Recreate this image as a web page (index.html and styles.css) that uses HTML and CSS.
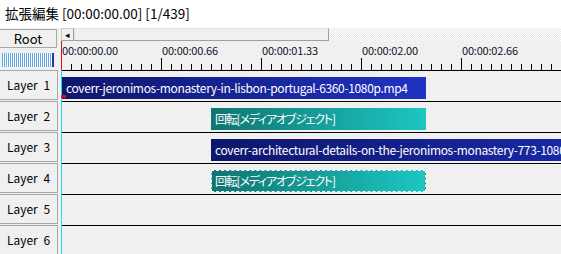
FILE: index.html
```html
<!DOCTYPE html>
<html lang="ja">
  <head>
    <meta charset="utf-8">
    <title>拡張編集</title>
    <link rel="stylesheet" href="styles.css">
  </head>
  <body>
    <div class="caption">拡張編集 [00:00:00.00] [1/439]</div>
    <div class="editor">
      <div class="side">
        <div class="root">Root</div>
        <div class="meter"></div>
        <div class="layer">Layer 1</div>
        <div class="layer">Layer 2</div>
        <div class="layer">Layer 3</div>
        <div class="layer">Layer 4</div>
        <div class="layer">Layer 5</div>
        <div class="layer">Layer 6</div>
      </div>
      <div class="timeline">
        <div class="scrollbar">
          <div class="arrow">◂</div>
          <div class="thumb"></div>
          <div class="track"></div>
        </div>
        <div class="ruler">
          <span>00:00:00.00</span>
          <span>00:00:00.66</span>
          <span>00:00:01.33</span>
          <span>00:00:02.00</span>
          <span>00:00:02.66</span>
        </div>
        <div class="row">
          <div class="clip video" style="margin-left: 1px; width: 364px">coverr-jeronimos-monastery-in-lisbon-portugal-6360-1080p.mp4</div>
        </div>
        <div class="row">
          <div class="clip filter" style="margin-left: 150px; width: 215px">回転[メディアオブジェクト]</div>
        </div>
        <div class="row">
          <div class="clip video" style="margin-left: 150px; width: 560px">coverr-architectural-details-on-the-jeronimos-monastery-773-1080p.mp4</div>
        </div>
        <div class="row">
          <div class="clip filter selected" style="margin-left: 150px; width: 215px">回転[メディアオブジェクト]</div>
        </div>
        <div class="row"></div>
        <div class="row"></div>
        <div class="cursor"></div>
        <div class="cursor-head"></div>
        <div class="cursor-mark"></div>
      </div>
    </div>
  </body>
</html>
```

FILE: styles.css
```css
body {
    margin: 0;
    background: #f0f0f0;
    color: #000;
    font-size: 12px;
    font-family: "Noto Sans CJK JP", "Noto Sans", sans-serif;
    overflow: hidden;
}

.caption {
    height: 28px;
    line-height: 26px;
    padding-left: 5px;
    font-size: 13.5px;
    background: #fff;
}

.editor {
    display: flex;
    height: 226px;
}

.side {
    width: 61px;
    flex: none;
}

.root {
    width: 57px;
    height: 19px;
    margin-top: 1px;
    box-sizing: border-box;
    border: 1px solid #a8a8a8;
    border-left: none;
    text-align: center;
    line-height: 17px;
    font-size: 13px;
}

.meter {
    width: 52px;
    height: 14px;
    margin: 5px 0 3px 2px;
    background:
        linear-gradient(to right, transparent 50px, #1c3f8f 50px),
        repeating-linear-gradient(to right, #5ea6ee 0 1px, #fff 1px 2px);
}

.layer {
    width: 58px;
    height: 30px;
    margin-bottom: 1px;
    box-sizing: border-box;
    border: 1px solid #a8a8a8;
    border-left: none;
    text-align: center;
    line-height: 28px;
    word-spacing: 3px;
}

.timeline {
    position: relative;
    flex: 1;
    overflow: hidden;
}

.scrollbar {
    display: flex;
    height: 13px;
}

.scrollbar .arrow {
    width: 13px;
    box-sizing: border-box;
    border: 1px solid #c8c8c8;
    border-right-color: #a0a0a0;
    border-bottom-color: #a0a0a0;
    font-size: 9px;
    line-height: 11px;
    text-align: center;
}

.scrollbar .thumb {
    width: 255px;
    box-sizing: border-box;
    border: 1px solid #e0e0e0;
    border-right-color: #a0a0a0;
    border-bottom-color: #a0a0a0;
}

.scrollbar .track {
    flex: 1;
    background: repeating-conic-gradient(#fff 0 25%, #e6e6e6 0 50%) 0 0 / 2px 2px;
}

.ruler {
    display: flex;
    height: 29px;
    background:
        repeating-linear-gradient(to right, #000 0 1px, transparent 1px 100px) left bottom / 100% 12px no-repeat,
        repeating-linear-gradient(to right, #000 0 1px, transparent 1px 10px) left bottom / 100% 6px no-repeat;
}

.ruler span {
    width: 100px;
    flex: none;
    padding: 2px 0 0 1px;
    box-sizing: border-box;
    font-size: 11px;
    line-height: 14px;
    letter-spacing: -0.2px;
    color: #10102a;
}

.row {
    display: flex;
    height: 31px;
    box-sizing: border-box;
    border-top: 1px solid #000;
}

.clip {
    flex: none;
    height: 22px;
    margin-top: 6px;
    box-sizing: border-box;
    padding-left: 4px;
    line-height: 22px;
    color: #fff;
    white-space: nowrap;
    overflow: hidden;
}

.clip.video {
    letter-spacing: -0.35px;
    background: linear-gradient(to right, #0e176c, #2032c4);
}

.clip.filter {
    font-feature-settings: "palt";
    letter-spacing: -1.2px;
    background: linear-gradient(to right, #0f7570, #1ec6c2);
}

.clip.selected {
    border: 1px dashed #fff;
    padding-left: 3px;
    line-height: 20px;
}

.cursor {
    position: absolute;
    left: 0;
    top: 42px;
    bottom: 0;
    width: 1px;
    background: #1fe0e8;
}

.cursor-head {
    position: absolute;
    left: 0;
    top: 13px;
    height: 29px;
    width: 1px;
    background: #e01010;
}

.cursor-mark {
    position: absolute;
    left: 0;
    top: 67px;
    width: 5px;
    height: 3px;
    background: #e01010;
}
```
